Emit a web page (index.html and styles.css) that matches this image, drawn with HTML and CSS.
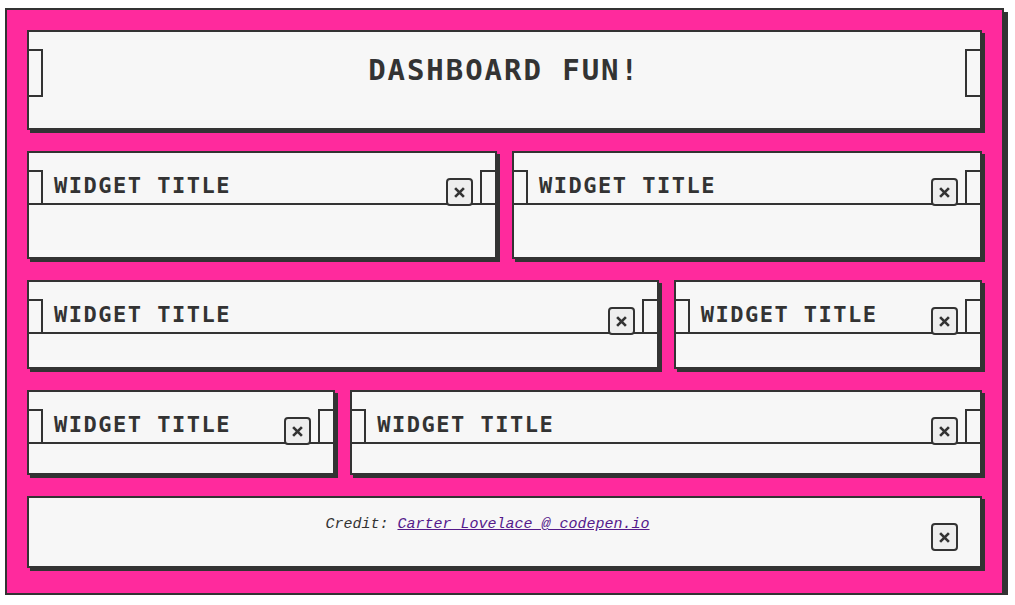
FILE: index.html
```html
<!DOCTYPE html>
<html lang="en">
<head>
<meta charset="utf-8">
<title>Dashboard Fun!</title>
<link rel="stylesheet" href="styles.css">
</head>
<body>
<div class="board">
  <header class="panel header">
    <span class="tab tab-left"></span>
    <h1 class="main-title">DASHBOARD FUN!</h1>
    <span class="tab tab-right"></span>
  </header>

  <section class="panel widget span-3">
    <div class="widget-head">
      <span class="htab htab-left"></span>
      <h2 class="widget-title">WIDGET TITLE</h2>
      <button class="close" aria-label="close"><svg viewBox="0 0 10 10" width="11" height="11"><path d="M1 1L9 9M9 1L1 9" stroke="#333" stroke-width="2.4"/></svg></button>
      <span class="htab htab-right"></span>
    </div>
    <div class="widget-body"></div>
  </section>

  <section class="panel widget span-3">
    <div class="widget-head">
      <span class="htab htab-left"></span>
      <h2 class="widget-title">WIDGET TITLE</h2>
      <button class="close" aria-label="close"><svg viewBox="0 0 10 10" width="11" height="11"><path d="M1 1L9 9M9 1L1 9" stroke="#333" stroke-width="2.4"/></svg></button>
      <span class="htab htab-right"></span>
    </div>
    <div class="widget-body"></div>
  </section>

  <section class="panel widget span-4">
    <div class="widget-head">
      <span class="htab htab-left"></span>
      <h2 class="widget-title">WIDGET TITLE</h2>
      <button class="close" aria-label="close"><svg viewBox="0 0 10 10" width="11" height="11"><path d="M1 1L9 9M9 1L1 9" stroke="#333" stroke-width="2.4"/></svg></button>
      <span class="htab htab-right"></span>
    </div>
    <div class="widget-body"></div>
  </section>

  <section class="panel widget span-2">
    <div class="widget-head">
      <span class="htab htab-left"></span>
      <h2 class="widget-title">WIDGET TITLE</h2>
      <button class="close" aria-label="close"><svg viewBox="0 0 10 10" width="11" height="11"><path d="M1 1L9 9M9 1L1 9" stroke="#333" stroke-width="2.4"/></svg></button>
      <span class="htab htab-right"></span>
    </div>
    <div class="widget-body"></div>
  </section>

  <section class="panel widget span-2">
    <div class="widget-head">
      <span class="htab htab-left"></span>
      <h2 class="widget-title">WIDGET TITLE</h2>
      <button class="close" aria-label="close"><svg viewBox="0 0 10 10" width="11" height="11"><path d="M1 1L9 9M9 1L1 9" stroke="#333" stroke-width="2.4"/></svg></button>
      <span class="htab htab-right"></span>
    </div>
    <div class="widget-body"></div>
  </section>

  <section class="panel widget span-4">
    <div class="widget-head">
      <span class="htab htab-left"></span>
      <h2 class="widget-title">WIDGET TITLE</h2>
      <button class="close" aria-label="close"><svg viewBox="0 0 10 10" width="11" height="11"><path d="M1 1L9 9M9 1L1 9" stroke="#333" stroke-width="2.4"/></svg></button>
      <span class="htab htab-right"></span>
    </div>
    <div class="widget-body"></div>
  </section>

  <footer class="panel footer">
    <span class="fspace-left"></span>
    <p class="credit">Credit: <a href="#">Carter Lovelace @ codepen.io</a></p>
    <button class="close footer-close" aria-label="close"><svg viewBox="0 0 10 10" width="11" height="11"><path d="M1 1L9 9M9 1L1 9" stroke="#333" stroke-width="2.4"/></svg></button>
    <span class="fspace-right"></span>
  </footer>
</div>
</body>
</html>
```

FILE: styles.css
```css
* {
  box-sizing: border-box;
}

html, body {
  margin: 0;
  padding: 0;
  background: #ffffff;
}

body {
  font-family: "DejaVu Sans Mono", "Liberation Mono", monospace;
  color: #333333;
}

.board {
  margin: 8px 0 0 5px;
  width: 999px;
  height: 587px;
  background: #ff2a9d;
  border: 2px solid #333333;
  box-shadow: 4px 4px 0 #333333;
  padding: 20px 20px 24px 20px;
  display: grid;
  grid-template-columns: repeat(6, 1fr);
  grid-template-rows: 100px 108px 89px 85px 72px;
  column-gap: 15px;
  row-gap: 21px;
}

.panel {
  background: #f7f7f7;
  border: 2px solid #333333;
  box-shadow: 3px 3px 0 #333333;
}

/* header */
.header {
  grid-column: 1 / -1;
  display: flex;
  align-items: flex-start;
}

.tab {
  flex: none;
  width: 14px;
  height: 48px;
  margin-top: 17px;
  border: 2px solid #333333;
}

.tab-left {
  border-left: none;
}

.tab-right {
  border-right: none;
  width: 15px;
}

.main-title {
  flex: 1;
  margin: 24px 0 0 0;
  text-align: center;
  font-size: 29px;
  line-height: 29px;
  font-weight: bold;
  letter-spacing: 1.95px;
}

/* widgets */
.span-2 { grid-column: span 2; }
.span-3 { grid-column: span 3; }
.span-4 { grid-column: span 4; }

.widget {
  display: flex;
  flex-direction: column;
}

.widget-head {
  flex: none;
  height: 52px;
  border-bottom: 2px solid #333333;
  display: flex;
  align-items: flex-end;
}

.htab {
  flex: none;
  width: 14px;
  height: 33px;
  border-top: 2px solid #333333;
}

.htab-left {
  border-right: 2px solid #333333;
}

.htab-right {
  width: 15px;
  border-left: 2px solid #333333;
  margin-left: 6px;
}

.widget-title {
  flex: 1;
  margin: 0 0 6px 11px;
  font-size: 22px;
  line-height: 22px;
  font-weight: bold;
  letter-spacing: 1.5px;
}

.widget-body {
  flex: 1;
}

.close {
  flex: none;
  width: 27px;
  height: 28px;
  margin: 0 1px -3px 0;
  padding: 0;
  border: 2px solid #333333;
  border-radius: 4px;
  background: #eeeeee;
  display: flex;
  align-items: center;
  justify-content: center;
}

.close svg {
  display: block;
}

/* footer */
.footer {
  grid-column: 1 / -1;
  display: flex;
  align-items: flex-start;
}

.fspace-left {
  flex: none;
  width: 14px;
}

.fspace-right {
  flex: none;
  width: 15px;
  margin-left: 6px;
}

.credit {
  flex: 1;
  margin: 18px 0 0 0;
  padding-left: 1px;
  text-align: center;
  font-family: "Liberation Mono", "DejaVu Sans Mono", monospace;
  font-style: italic;
  font-size: 15px;
  line-height: 18px;
  color: #333333;
}

.credit a {
  color: #551a8b;
  text-decoration: underline;
}

.footer-close {
  margin: 25px 1px 0 0;
}
```
